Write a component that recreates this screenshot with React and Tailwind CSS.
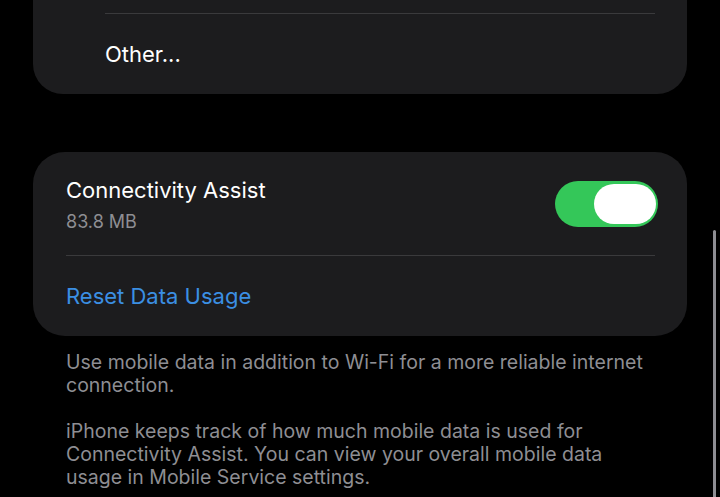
import React from 'react';

function Toggle() {
    return (
        <div className="flex h-[46px] w-[103px] items-center justify-end rounded-full bg-[#34c759] px-[2px]">
            <div className="h-[40px] w-[62px] rounded-full bg-white" />
        </div>
    );
}

export default function App() {
    return (
        <div
            className="relative h-[497px] w-[720px] overflow-hidden bg-black"
            style={{ fontFamily: 'Inter, Roboto, "Noto Sans", sans-serif' }}
        >
            {/* 위 카드 (잘린 상태) */}
            <div className="mx-[33px] rounded-b-[30px] bg-[#1c1c1e] pt-[13px]">
                <div className="ml-[72px] mr-[32px] h-px bg-[#3a3a3c]" />
                <div className="flex h-[80px] items-center pl-[72px] text-[22px] text-white">Other...</div>
            </div>

            {/* Connectivity Assist 카드 */}
            <div className="mx-[33px] mt-[58px] rounded-[32px] bg-[#1c1c1e] pl-[33px] pr-[32px]">
                <div className="flex h-[103px] items-center justify-between">
                    <div className="flex flex-col pt-[2px]">
                        <span className="text-[22px] leading-[28px] text-white">Connectivity Assist</span>
                        <span className="mt-[6px] text-[18px] leading-[24px] text-[#8e8e93]">83.8 MB</span>
                    </div>
                    <div className="-mr-[3px]">
                        <Toggle />
                    </div>
                </div>
                <div className="h-px bg-[#3a3a3c]" />
                <div className="flex h-[80px] items-center pt-[1px] text-[22px] text-[#3b8fe3]">Reset Data Usage</div>
            </div>

            {/* 설명 */}
            <div className="mt-[15px] pl-[66px] pr-[65px] text-[19.5px] leading-[22.7px] text-[#8e8e93]">
                <p>
                    Use mobile data in addition to Wi-Fi for a more reliable internet
                    <br />
                    connection.
                </p>
                <p className="mt-[24px]">
                    iPhone keeps track of how much mobile data is used for
                    <br />
                    Connectivity Assist. You can view your overall mobile data
                    <br />
                    usage in Mobile Service settings.
                </p>
            </div>

            {/* 스크롤바 */}
            <div className="absolute left-[713px] top-[230px] h-[280px] w-[3px] rounded-full bg-[#8e8e93]" />
        </div>
    );
}
